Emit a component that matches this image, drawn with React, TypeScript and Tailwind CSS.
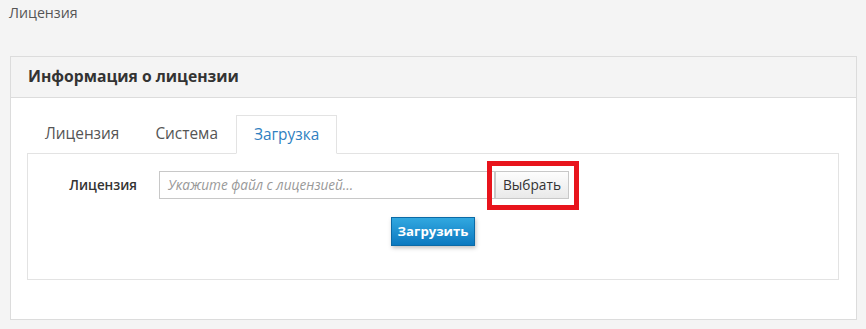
import React from "react";

export default function App() {
  return (
    <div
      className="min-h-[329px] w-full bg-[#f4f4f4] text-[#333]"
      style={{ fontFamily: '"Open Sans", "Noto Sans", sans-serif' }}
    >
      <div className="pl-[9px] pt-[3px] text-[14.2px] leading-[20px] text-[#555]">Лицензия</div>
      <div className="mt-[33px] ml-[10px] mr-[9px] border border-[#dcdcdc] bg-white">
        <div className="flex h-[41px] items-center border-b border-[#dcdcdc] bg-[#f4f4f4] px-[17px] text-[15.7px] font-bold text-[#333]">
          Информация о лицензии
        </div>
        <div className="pl-[16px] pr-[17px] pt-[17px] pb-[39px]">
          <div className="flex border-b border-[#e3e3e3]">
            <div className="-mb-px flex h-[38px] items-center border border-transparent px-[17px] text-[15.4px] text-[#555]">
              Лицензия
            </div>
            <div className="-mb-px flex h-[38px] items-center border border-transparent px-[17px] text-[15.4px] text-[#555]">
              Система
            </div>
            <div className="-mb-px flex h-[39px] items-center border border-[#e3e3e3] border-b-white bg-white px-[17px] text-[15.4px] text-[#2f7fc1]">
              Загрузка
            </div>
          </div>
          <div className="border border-t-0 border-[#e3e3e3] pt-[17px] pb-[33px]">
            <div className="flex items-center">
              <div className="w-[131px] pr-[22px] text-right text-[13.4px] font-semibold text-[#333]">
                Лицензия
              </div>
              <div className="flex h-[28px] w-[336px] items-center border border-[#c8c8c8] px-[8px] text-[13.6px] italic text-[#999]">
                Укажите файл с лицензией...
              </div>
              <div className="relative">
                <button className="flex h-[28px] w-[74px] items-center justify-center border border-[#c8c8c8] bg-gradient-to-b from-[#fdfdfd] to-[#e9e9e9] text-[13.7px] text-[#333]">
                  Выбрать
                </button>
                <div className="pointer-events-none absolute -left-[8px] -top-[10px] h-[49px] w-[92px] border-[5px] border-[#e8141c]" />
              </div>
            </div>
            <div className="mt-[18px] flex justify-center">
              <button className="flex h-[29px] w-[84px] items-center justify-center border border-[#0b6aa6] bg-gradient-to-b from-[#31a8e0] to-[#0a79c0] text-[13.2px] font-bold text-white shadow-[1px_2px_4px_rgba(0,0,0,0.25)]">
                Загрузить
              </button>
            </div>
          </div>
        </div>
      </div>
    </div>
  );
}
